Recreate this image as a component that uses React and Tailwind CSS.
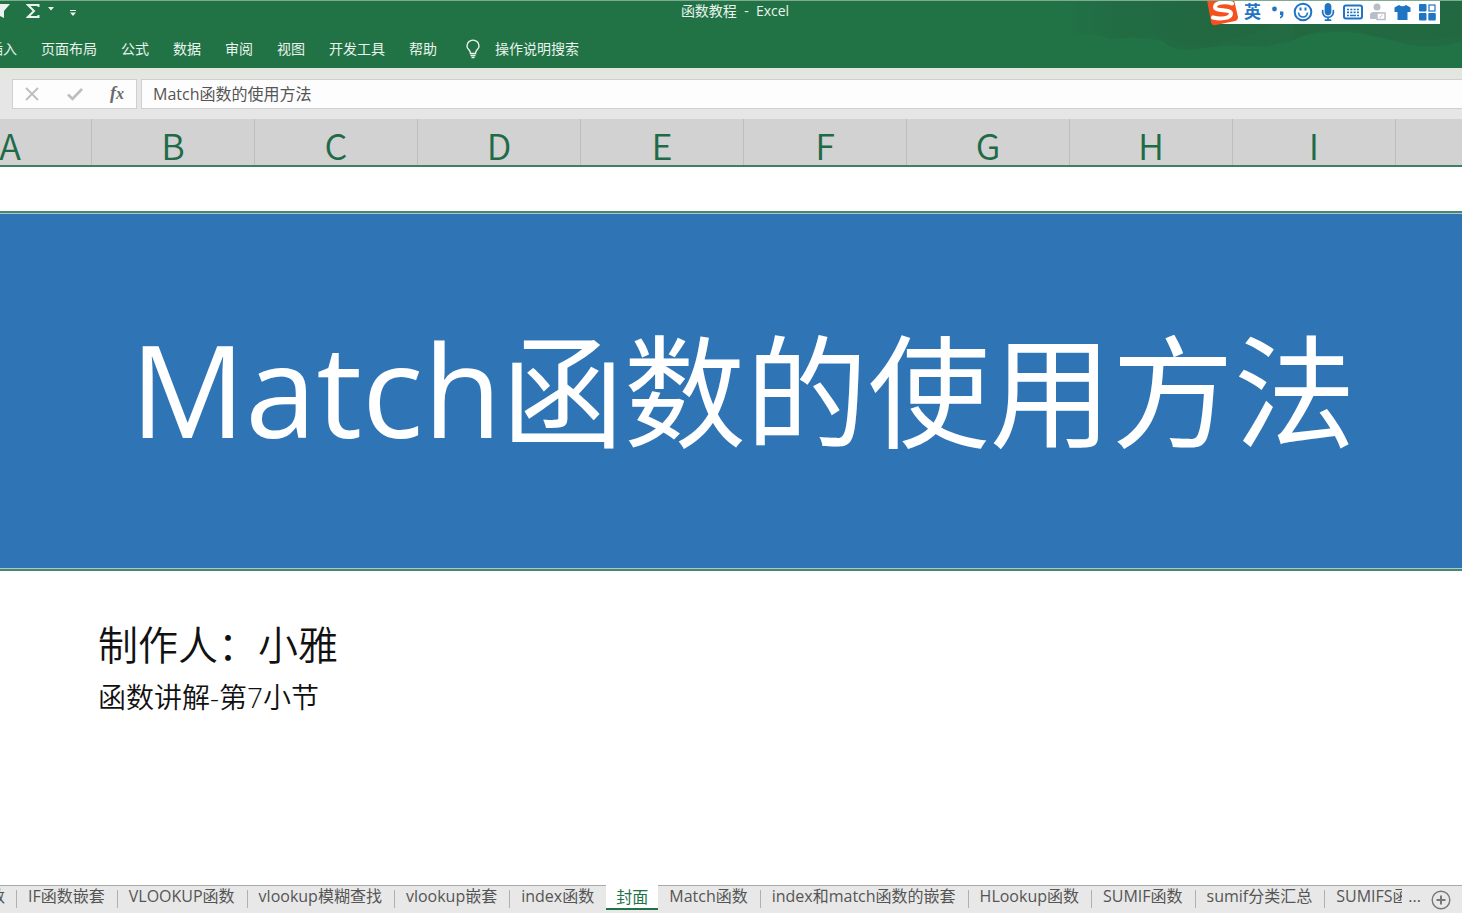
import React, { useState } from 'react';
import { FaMicrophone } from 'react-icons/fa';

const ribbonTabs = ['插入', '页面布局', '公式', '数据', '审阅', '视图', '开发工具', '帮助'];

const columns = ['A', 'B', 'C', 'D', 'E', 'F', 'G', 'H', 'I'];

const sheets = [
  'IF函数嵌套',
  'VLOOKUP函数',
  'vlookup模糊查找',
  'vlookup嵌套',
  'index函数',
  '封面',
  'Match函数',
  'index和match函数的嵌套',
  'HLookup函数',
  'SUMIF函数',
  'sumif分类汇总',
];

const SogouLogo = () => (
  <svg viewBox="0 0 34 26" className="h-[26px] w-[34px]" aria-hidden="true">
    <path d="M1 0H28L32 17Q32 20 29 21L10 25Q6 26 5 22Z" fill="#f4511e" />
    <path
      d="M26 3.500C20 1.500 9 2 9 7C9 12 25 8.500 25 13.500C25 18.500 14 19.500 7 17.500"
      fill="none"
      stroke="#fff"
      strokeWidth="4"
      strokeLinecap="round"
    />
  </svg>
);

const PunctuationIcon = () => (
  <svg viewBox="0 0 14 14" className="size-[14px]" fill="#1f74c4" aria-hidden="true">
    <circle cx="3.500" cy="4" r="2.400" />
    <path d="M9 6.500h3.400v3Q12.200 12.500 9 13.500v-1.500Q10.500 11 10.400 10H9z" />
  </svg>
);

const SmileIcon = () => (
  <svg viewBox="0 0 20 20" className="size-5" fill="none" stroke="#1f74c4" strokeWidth="2" aria-hidden="true">
    <circle cx="10" cy="10" r="8.300" />
    <path d="M5.500 10.500Q6 15 10 15T14.500 10.500" strokeWidth="1.600" />
    <path d="M7.500 5.500v3M12.500 5.500v3" />
  </svg>
);

const KeyboardIcon = () => (
  <svg viewBox="0 0 20 16" className="h-4 w-5" fill="none" stroke="#1f74c4" aria-hidden="true">
    <rect x="1" y="1.500" width="18" height="13" rx="2" strokeWidth="2" />
    <path d="M4 5.500h12M4 8.300h12" strokeWidth="1.700" strokeDasharray="2 1.300" />
    <path d="M4 11.500h2M7 11.500h6M14 11.500h2" strokeWidth="1.500" />
  </svg>
);

const UserIcon = () => (
  <svg viewBox="0 0 16 18" className="h-[18px] w-4" aria-hidden="true">
    <circle cx="7" cy="4" r="3.500" fill="#b9bdc9" />
    <path d="M0 15V12Q0 9 4 9H10V16H1Q0 16 0 15Z" fill="#b9bdc9" />
    <rect x="7" y="10" width="8" height="6.500" fill="#fff" stroke="#b9bdc9" strokeWidth="1.500" />
    <path d="M9.500 14.500L12.500 12" stroke="#b9bdc9" />
  </svg>
);

const ShirtIcon = () => (
  <svg viewBox="0 0 17 17" className="size-[17px]" fill="#1f74c4" aria-hidden="true">
    <path d="M5 1Q8.500 3.500 12 1L16.500 3.500V8H13.500V16H3.500V8H0.500V3.500Z" />
  </svg>
);

const GridIcon = () => (
  <svg viewBox="0 0 17 17" className="size-[17px]" fill="#1f74c4" aria-hidden="true">
    <rect x="0" y="0" width="7.500" height="7.500" rx="1" />
    <rect x="10" y="1" width="6" height="6" fill="none" stroke="#1f74c4" strokeWidth="1.200" />
    <rect x="0" y="9" width="7.500" height="7.500" rx="1" />
    <rect x="9.300" y="9" width="7.500" height="7.500" rx="1" />
  </svg>
);

const imeTools = [
  { label: '英文', icon: <span className="text-[17px] font-bold leading-5">英</span> },
  { label: '标点', icon: <PunctuationIcon /> },
  { label: '表情', icon: <SmileIcon /> },
  { label: '语音', icon: <FaMicrophone size={18} /> },
  { label: '软键盘', icon: <KeyboardIcon /> },
  { label: '登录', icon: <UserIcon /> },
  { label: '皮肤', icon: <ShirtIcon /> },
  { label: '工具箱', icon: <GridIcon /> },
];

const ImeBar = () => (
  <div className="absolute right-[22px] -top-px flex h-6 items-start bg-gradient-to-r from-transparent from-[12px] to-white to-[12px]">
    <SogouLogo />
    {imeTools.map((tool) => (
      <button
        key={tool.label}
        type="button"
        aria-label={tool.label}
        className="flex h-6 w-[25px] items-center justify-center text-[#1f74c4]"
      >
        {tool.icon}
      </button>
    ))}
  </div>
);

const RibbonArt = () => (
  <svg viewBox="0 0 422 68" className="absolute right-0 top-0 h-[68px] w-[422px]" aria-hidden="true">
    <defs>
      <linearGradient id="art" x1="0" x2="1" y1="0" y2="0">
        <stop offset="0" stopColor="#226540" stopOpacity="0" />
        <stop offset="0.150" stopColor="#226540" stopOpacity="0.800" />
        <stop offset="1" stopColor="#226540" stopOpacity="0.900" />
      </linearGradient>
    </defs>
    <path
      d="M20 0H422V40Q400 48 370 44Q320 30 300 31Q270 30 250 40L225 46Q190 42 160 48Q135 52 122 40Q100 34 70 38Q50 30 25 34Q32 20 20 0Z"
      fill="url(#art)"
      opacity="0.700"
    />
    <path
      d="M100 0H422V34Q350 46 320 30Q280 24 252 40Q262 22 240 20Q200 42 150 44Q120 40 110 26Z"
      fill="url(#art)"
      opacity="0.500"
    />
  </svg>
);

const TitleBar = () => (
  <header className="relative h-[68px] overflow-hidden border-t border-[#7fab92] bg-[#217346] text-[#eaf3ed]">
    <RibbonArt />
    <div className="relative flex h-5 items-center">
      <div className="flex flex-1 items-center">
        <button type="button" aria-label="筛选" className="w-[10px]">
          <svg viewBox="0 0 10 16" className="h-4 w-[10px]" fill="currentColor" aria-hidden="true">
            <path d="M-6 1H10L4 8V15L0 13V8Z" />
          </svg>
        </button>
        <button type="button" aria-label="自动求和" className="ml-4 flex items-center gap-2">
          <svg viewBox="0 0 14 16" className="h-4 w-[14px]" fill="none" stroke="currentColor" strokeWidth="2" aria-hidden="true">
            <path d="M12.500 4V2H2L8 8L2 14H12.500V12" />
          </svg>
          <svg viewBox="0 0 6 4" className="mb-1 h-1 w-[6px]" fill="currentColor" aria-hidden="true">
            <path d="M0 0H6L3 3.500Z" />
          </svg>
        </button>
        <button type="button" aria-label="自定义快速访问工具栏" className="ml-4">
          <svg viewBox="0 0 6 6" className="mt-1 size-[6px]" fill="currentColor" aria-hidden="true">
            <path d="M0 0H6V1H0ZM0 2.500H6L3 6Z" />
          </svg>
        </button>
      </div>
      <h1 className="whitespace-pre pl-2 text-sm leading-5">函数教程  -  Excel</h1>
      <div className="flex-1" />
    </div>
    <nav className="relative -ml-[11px] flex h-[47px] items-center gap-6 pt-2 text-sm leading-5">
      {ribbonTabs.map((tab) => (
        <button key={tab} type="button" className="flex-none">
          {tab}
        </button>
      ))}
      <button type="button" className="ml-1 flex flex-none items-center gap-[14px]">
        <svg viewBox="0 0 16 20" className="h-5 w-4" fill="none" stroke="currentColor" strokeWidth="1.400" aria-hidden="true">
          <path d="M5.500 14.500Q5.500 12.500 3.700 10.600Q2 9 2 6.900A6 5.800 0 0 1 14 6.900Q14 9 12.300 10.600Q10.500 12.500 10.500 14.500Z" />
          <path d="M5.500 16.500H10.500M6.500 18.500H9.500" />
        </svg>
        操作说明搜索
      </button>
    </nav>
    <ImeBar />
  </header>
);

const FormulaBar = ({ value, onChange }) => (
  <div className="flex h-[51px] items-center gap-1 bg-gradient-to-b from-[#e2e6dc] to-[#e6e6e6] to-30% pl-3">
    <div className="flex h-[30px] w-[125px] flex-none items-center justify-between border border-[#cfcfcf] bg-[#fdfdfd] px-3">
      <button type="button" aria-label="取消" className="text-[#bdbdbd]">
        <svg viewBox="0 0 14 14" className="size-[14px]" stroke="currentColor" strokeWidth="1.800" aria-hidden="true">
          <path d="M1 1L13 13M13 1L1 13" />
        </svg>
      </button>
      <button type="button" aria-label="输入" className="text-[#bdbdbd]">
        <svg viewBox="0 0 16 14" className="h-[14px] w-4" fill="none" stroke="currentColor" strokeWidth="2.600" aria-hidden="true">
          <path d="M1 7.500L5.500 12L15 2" />
        </svg>
      </button>
      <button
        type="button"
        aria-label="插入函数"
        className="font-['Liberation_Serif',serif] text-lg font-bold italic leading-5 text-[#6a6a6a]"
      >
        f<span className="text-base">x</span>
      </button>
    </div>
    <input
      type="text"
      aria-label="编辑栏"
      value={value}
      onChange={(e) => onChange(e.target.value)}
      className="h-[30px] min-w-0 flex-1 border border-r-0 border-[#cfcfcf] bg-[#fdfdfd] px-[11px] pb-[2px] text-base text-[#555] outline-none"
    />
  </div>
);

const ColumnHeaders = () => (
  <div className="flex h-12 overflow-hidden border-b-2 border-[#3f7f62] bg-[#d2d2d2]">
    <div className="-ml-[71px] flex flex-none">
      {columns.map((col) => (
        <div
          key={col}
          className="flex w-[163px] flex-none items-center justify-center border-r border-[#bdbdbd] pt-1 font-['Noto_Sans_CJK_SC',sans-serif] text-4xl font-[350] leading-10 text-[#1f6b48]"
        >
          {col}
        </div>
      ))}
    </div>
  </div>
);

const Separator = () => <span className="mt-1 h-[18px] w-px flex-none bg-[#b0b0b0]" />;

const SheetTabs = ({ active, onSelect }) => {
  const activeIndex = sheets.indexOf(active);

  return (
    <footer className="flex h-7 overflow-hidden bg-[#e8e8e8] text-base leading-5 text-[#555]">
      <div className="flex w-[17px] flex-none justify-end border-t border-[#a9a9a9]">
        <button type="button" className="flex-none pb-2 pr-[11px]">函数</button>
        <Separator />
      </div>
      {sheets.map((name, index) =>
        index === activeIndex ? (
          <button
            key={name}
            type="button"
            className="h-[25px] flex-none border-b-2 border-[#217346] bg-white px-[10px] text-[#217346]"
          >
            {name}
          </button>
        ) : (
          <div key={name} className="flex flex-none border-t border-[#a9a9a9]">
            <button type="button" onClick={() => onSelect(name)} className="pb-2 pl-[11px] pr-3">
              {name}
            </button>
            {index !== activeIndex - 1 && <Separator />}
          </div>
        )
      )}
      <div className="flex min-w-0 flex-1 border-t border-[#a9a9a9] pl-[11px]">
        <button type="button" className="w-[66px] flex-none overflow-hidden whitespace-nowrap pb-2 text-left">
          SUMIFS函
        </button>
        <button type="button" aria-label="更多工作表" className="ml-[6px] flex-none pb-2">
          ...
        </button>
        <button type="button" aria-label="新工作表" className="ml-[10px] flex-none">
          <svg viewBox="0 0 20 20" className="size-5" fill="none" stroke="#777" strokeWidth="1.400" aria-hidden="true">
            <circle cx="10" cy="10" r="8.800" />
            <path d="M10 5.500V14.500M5.500 10H14.500" strokeWidth="2" />
          </svg>
        </button>
      </div>
    </footer>
  );
};

const App = () => {
  const [formula, setFormula] = useState('Match函数的使用方法');
  const [activeSheet, setActiveSheet] = useState('封面');

  return (
    <div className="flex min-h-screen flex-col overflow-hidden bg-white font-['Open_Sans','Noto_Sans_CJK_SC',sans-serif]">
      <TitleBar />
      <FormulaBar value={formula} onChange={setFormula} />
      <ColumnHeaders />

      <main className="flex-1 pt-11">
        {/* Merged title cell */}
        <div className="border-y-2 border-[#4a8770]">
          <div className="flex h-[356px] items-center justify-center border-y border-[#a9cbd0] bg-[#2f75b5] pb-1 pl-6">
            <h2 className="whitespace-nowrap text-[122px] leading-none text-white">
              <span className="text-[128px]">Match</span>函数的使用方法
            </h2>
          </div>
        </div>
        <div className="pl-[98px] pt-[46px] text-[#111]">
          <p className="text-[40px] font-[350] leading-[56px]">制作人：小雅</p>
          <p className="text-[28px] font-[350] leading-[48px]">函数讲解-第7小节</p>
        </div>
      </main>

      <SheetTabs active={activeSheet} onSelect={setActiveSheet} />
    </div>
  );
};

export default App;
